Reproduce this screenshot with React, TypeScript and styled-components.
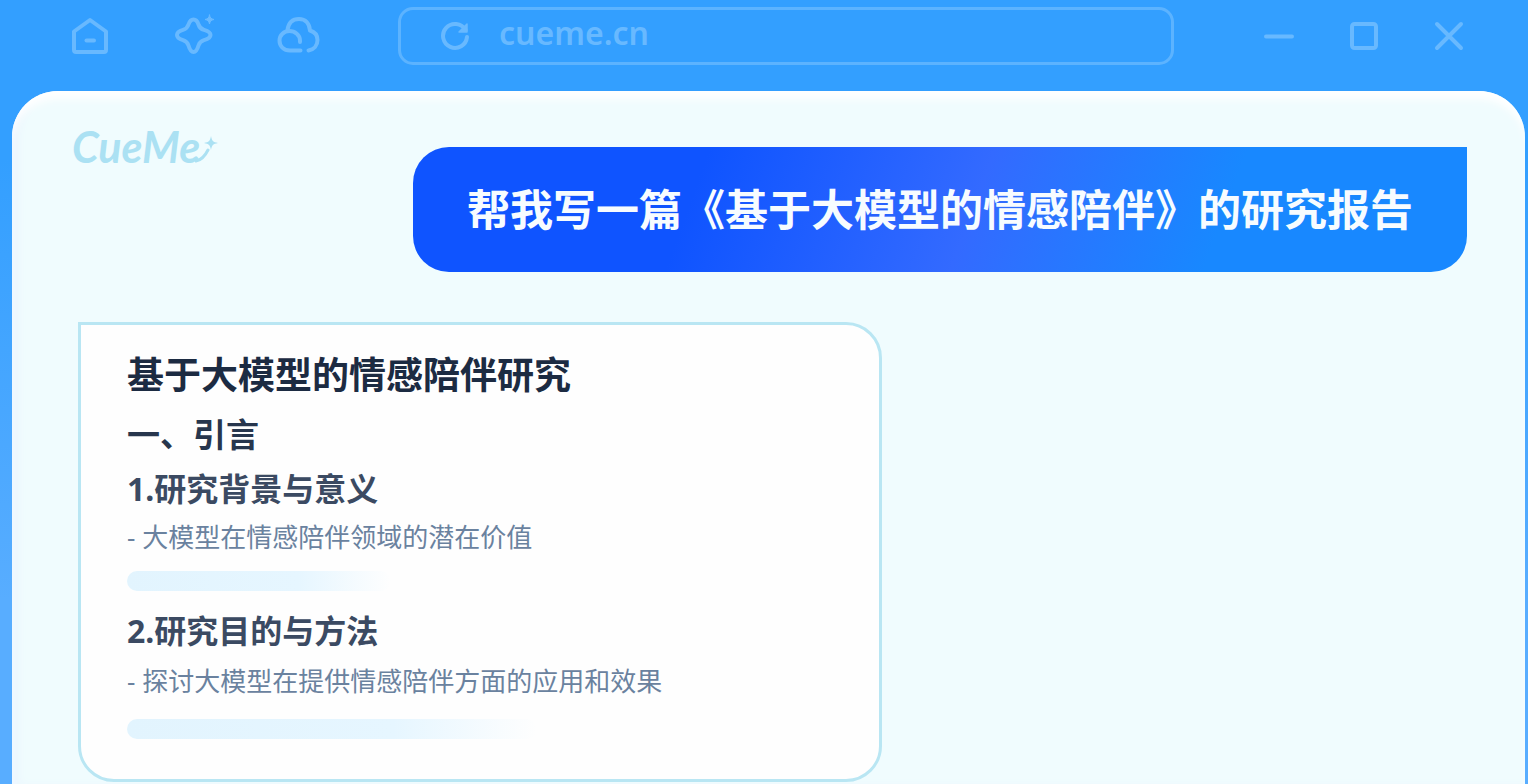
import React from "react";
import styled, { createGlobalStyle } from "styled-components";

const GlobalStyle = createGlobalStyle`
  *, *::before, *::after { box-sizing: border-box; }
  body {
    margin: 0;
    background: #339fff;
    font-family: "Noto Sans", "Noto Sans CJK SC", sans-serif;
  }
  h1, h2, h3, p { margin: 0; }
`;

const Window = styled.div`
  display: flex;
  flex-direction: column;
  min-height: 100vh;
  padding: 0 3px 0 12px;
  background: linear-gradient(180deg, #339fff 0, #339fff 160px, #58adff 600px);
`;

const TitleBar = styled.header`
  display: flex;
  align-items: center;
  height: 91px;
  padding: 7px 61px 27px 56px;
  color: #68b9ff;
`;

const ButtonGroup = styled.div<{ $gap: number }>`
  display: flex;
  gap: ${(p) => p.$gap}px;
`;

const IconButton = styled.button<{ $width: number }>`
  display: flex;
  align-items: center;
  justify-content: center;
  width: ${(p) => p.$width}px;
  height: 44px;
  padding: 0;
  border: 0;
  background: none;
  color: inherit;
  cursor: pointer;

  svg {
    flex: none;
    fill: none;
    stroke: currentColor;
    stroke-width: 4;
    stroke-linecap: round;
    stroke-linejoin: round;
  }
`;

const AddressBar = styled.form`
  display: flex;
  flex: 1;
  align-items: center;
  gap: 22px;
  height: 58px;
  min-width: 0;
  margin: 0 90px 0 78px;
  padding: 0 32px;
  border: 3px solid #5cb3ff;
  border-radius: 15px;
`;

const AddressInput = styled.input`
  flex: 1;
  min-width: 0;
  height: 44px;
  padding: 0 0 6px;
  border: 0;
  outline: 0;
  background: none;
  color: inherit;
  font: 600 32px/38px "Noto Sans", sans-serif;
`;

const Panel = styled.main`
  flex: 1;
  padding: 32px 58px 3px 60px;
  border-radius: 46px 46px 0 0;
  background: #f0fcfe;
  box-shadow: inset 0 10px 8px -2px #ffffff, inset 8px 0 12px -4px #e9f3ff;
`;

const Conversation = styled.div`
  display: flex;
  flex-direction: column;
`;

const TopRow = styled.div`
  display: flex;
  align-items: flex-start;
  justify-content: space-between;
`;

const Logo = styled.a`
  display: flex;
  align-items: flex-start;
  color: #abe1f3;
  font: italic 700 43px/48px Lato, sans-serif;
  text-decoration: none;

  svg { flex: none; margin: 13px 0 0 -5px; }
`;

const Prompt = styled.p`
  margin-top: 24px;
  padding: 31px 54px 30px;
  border-radius: 36px 0 36px 36px;
  background: linear-gradient(110deg, #0f54ff 0, #0f54ff 27%, #336aff 53%, #1888ff 76%, #1888ff 100%);
  color: #f7fcff;
  font-size: 43px;
  font-weight: 700;
  line-height: 64px;
`;

const Report = styled.article`
  display: flex;
  flex-direction: column;
  align-self: flex-start;
  width: 804px;
  max-width: 100%;
  margin: 50px 0 0 6px;
  padding: 24px 46px 40px;
  border: 3px solid #b9e6f3;
  border-radius: 0 36px 36px 36px;
  background: #fefefe;
`;

const Title = styled.h1`
  color: #1c2b42;
  font-size: 37px;
  font-weight: 700;
  line-height: 52px;
`;

const Section = styled.h2`
  margin-top: 10px;
  color: #27364d;
  font-size: 33px;
  font-weight: 700;
  line-height: 48px;
`;

const Topic = styled.h3<{ $space: number }>`
  margin-top: ${(p) => p.$space}px;
  color: #3b4a62;
  font-size: 32px;
  font-weight: 700;
  line-height: 44px;
`;

const Point = styled.p<{ $space: number }>`
  margin-top: ${(p) => p.$space}px;
  color: #6a829f;
  font-size: 26px;
  font-weight: 400;
  line-height: 36px;
`;

const Placeholder = styled.div<{ $width: number; $space: number }>`
  width: ${(p) => p.$width}px;
  max-width: 100%;
  height: 20px;
  margin-top: ${(p) => p.$space}px;
  border-radius: 10px;
  background: linear-gradient(90deg, #e2f4fe 0, #e6f6ff 65%, #fefefe 100%);
`;

const HomeIcon = () => (
  <svg width="44" height="44" viewBox="0 0 44 44" aria-hidden="true">
    <path d="M6 17.500 22 6l16 11.500V36a2 2 0 0 1-2 2H8a2 2 0 0 1-2-2Z" />
    <path d="M18.500 26.500h7.500" />
  </svg>
);

const SparkleIcon = () => (
  <svg width="44" height="44" viewBox="0 0 44 44" aria-hidden="true">
    <path d="M21.500 5.500c3 0 4 2 5 5 1 3.200 2.500 4.500 5.500 5.400 3.500 1 6.500 2.300 6.500 5.100s-3 4.100-6.500 5.100c-3 .9-4.500 2.200-5.500 5.400-1 3.500-2 6.500-5 6.500s-4-3-5-6.500c-1-3.200-2.500-4.500-5.500-5.400-3.500-1-6-2.300-6-5.100s2.500-4.100 6-5.100c3-.9 4.500-2.200 5.500-5.400 1-3 2-5 5-5Z" />
    <path d="M37.500 1c.8 3.200 1.300 3.700 4.500 4.500-3.200.8-3.700 1.300-4.500 4.500-.8-3.200-1.300-3.700-4.500-4.500 3.200-.8 3.700-1.300 4.500-4.500Z" fill="currentColor" strokeWidth="1" />
  </svg>
);

const CloudIcon = () => (
  <svg width="44" height="44" viewBox="0 0 44 44" aria-hidden="true">
    <path d="M24.500 36.500H14C7.500 36.500 3.500 32 3.500 26.500S8 17 13.500 17s10.500 4 10.500 9.500V28" />
    <path d="M11.500 16C12.500 8.500 17 5 23 5c6.500 0 10.500 4.500 11 11.500 5 1.500 7.500 5 7.500 9.500 0 5.500-3.500 9.500-9 10.500" />
  </svg>
);

const ReloadIcon = () => (
  <svg width="30" height="30" viewBox="0 0 30 30" aria-hidden="true">
    <path d="M25.500 9A12 12 0 1 0 27 16" />
    <path d="M27 3v8h-8Z" fill="currentColor" strokeWidth="1.500" />
  </svg>
);

const MinimizeIcon = () => (
  <svg width="30" height="30" viewBox="0 0 30 30" aria-hidden="true">
    <path d="M2 15.500h26" />
  </svg>
);

const MaximizeIcon = () => (
  <svg width="30" height="30" viewBox="0 0 30 30" aria-hidden="true">
    <rect x="3" y="3" width="24" height="24" rx="2.500" />
  </svg>
);

const CloseIcon = () => (
  <svg width="30" height="30" viewBox="0 0 30 30" aria-hidden="true">
    <path d="m3 3 24 24M27 3 3 27" />
  </svg>
);

const LogoSpark = () => (
  <svg width="24" height="32" viewBox="0 0 24 32" aria-hidden="true">
    <path d="M1 25c6-1 9-5 12-11" fill="none" stroke="currentColor" strokeWidth="3" strokeLinecap="round" />
    <path d="M16 0c1 5 2 6 7 7-5 1-6 2-7 7-1-5-2-6-7-7 5-1 6-2 7-7Z" fill="currentColor" />
  </svg>
);

export default function App() {
  return (
    <>
      <GlobalStyle />
      <Window>
        <TitleBar>
          <ButtonGroup $gap={60}>
            <IconButton $width={44} type="button" aria-label="主页"><HomeIcon /></IconButton>
            <IconButton $width={44} type="button" aria-label="灵感"><SparkleIcon /></IconButton>
            <IconButton $width={44} type="button" aria-label="云盘"><CloudIcon /></IconButton>
          </ButtonGroup>
          <AddressBar onSubmit={(e) => e.preventDefault()}>
            <IconButton $width={44} type="button" aria-label="刷新"><ReloadIcon /></IconButton>
            <AddressInput type="text" aria-label="网址" defaultValue="cueme.cn" spellCheck={false} />
          </AddressBar>
          <ButtonGroup $gap={55}>
            <IconButton $width={30} type="button" aria-label="最小化"><MinimizeIcon /></IconButton>
            <IconButton $width={30} type="button" aria-label="最大化"><MaximizeIcon /></IconButton>
            <IconButton $width={30} type="button" aria-label="关闭"><CloseIcon /></IconButton>
          </ButtonGroup>
        </TitleBar>
        <Panel>
          <Conversation>
            <TopRow>
              <Logo href="#" aria-label="CueMe">CueMe<LogoSpark /></Logo>
              <Prompt>帮我写一篇《基于大模型的情感陪伴》的研究报告</Prompt>
            </TopRow>
            <Report>
              <Title>基于大模型的情感陪伴研究</Title>
              <Section>一、引言</Section>
              <Topic $space={8}>1.研究背景与意义</Topic>
              <Point $space={8}>- 大模型在情感陪伴领域的潜在价值</Point>
              <Placeholder $width={264} $space={16} />
              <Topic $space={18}>2.研究目的与方法</Topic>
              <Point $space={10}>- 探讨大模型在提供情感陪伴方面的应用和效果</Point>
              <Placeholder $width={410} $space={20} />
            </Report>
          </Conversation>
        </Panel>
      </Window>
    </>
  );
}
